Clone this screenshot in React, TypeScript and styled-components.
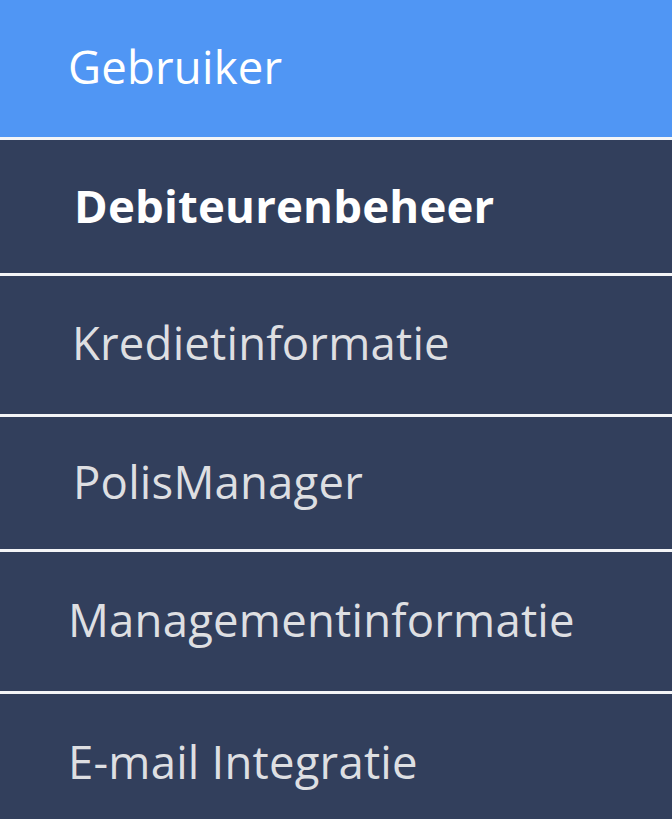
import React from "react";
import styled, {createGlobalStyle} from "styled-components";

const Global = createGlobalStyle`
    html, body {
        margin: 0;
        padding: 0;
        background: #ffffff;
    }
    body {
        font-family: 'Open Sans', 'Noto Sans', sans-serif;
    }
`;

const Menu = styled.nav`
    display: flex;
    flex-direction: column;
    width: 672px;
    height: 819px;
    overflow: hidden;
    background-color: #ffffff;
`;

// $lift > 0 moves the label up, < 0 moves it down
const Item = styled.div<{ $active?: boolean; $height: number; $indent: number; $lift: number }>`
    display: flex;
    align-items: center;
    flex-shrink: 0;
    height: ${p => p.$height}px;
    padding-left: ${p => p.$indent}px;
    padding-bottom: ${p => Math.max(p.$lift, 0)}px;
    padding-top: ${p => Math.max(-p.$lift, 0)}px;
    box-sizing: border-box;
    background-color: ${p => (p.$active ? "#5096f4" : "#323f5c")};
    border-bottom: 3px solid #f4f5f7;
    &:last-child {
        border-bottom: none;
        flex-grow: 1;
    }
`;

const Label = styled.span<{ $bold?: boolean; $active?: boolean }>`
    font-size: 45.5px;
    font-weight: ${p => (p.$bold ? 700 : 400)};
    color: ${p => (p.$active || p.$bold ? "#ffffff" : "#dedfe2")};
    letter-spacing: 0.2px;
    white-space: nowrap;
`;

const items = [
    {label: "Gebruiker", active: true, height: 140, indent: 68, lift: 5},
    {label: "Debiteurenbeheer", bold: true, height: 136, indent: 74, lift: 3},
    {label: "Kredietinformatie", height: 141, indent: 72, lift: 7},
    {label: "PolisManager", height: 135, indent: 73, lift: 5},
    {label: "Managementinformatie", height: 142, indent: 68, lift: 5},
    {label: "E-mail Integratie", height: 125, indent: 68, lift: -9},
];

const App = () => (
    <>
        <Global/>
        <Menu>
            {items.map(item => (
                <Item key={item.label} $active={item.active} $height={item.height}
                      $indent={item.indent} $lift={item.lift}>
                    <Label $bold={item.bold} $active={item.active}>{item.label}</Label>
                </Item>
            ))}
        </Menu>
    </>
);

export default App;
